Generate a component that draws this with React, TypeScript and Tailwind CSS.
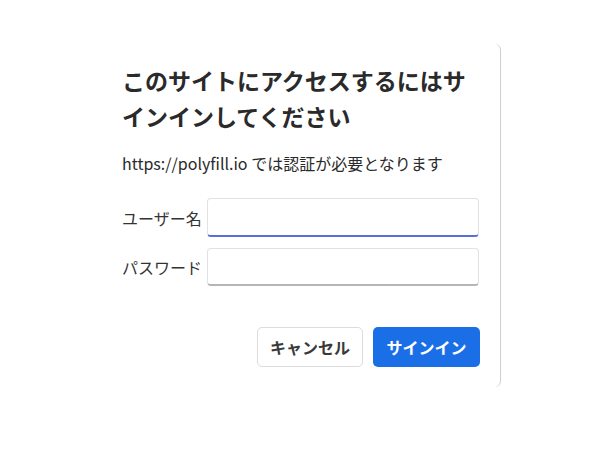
import * as React from "react";

const font = {
  fontFamily: '"Noto Sans CJK JP", "Noto Sans", sans-serif',
};

export default function App() {
  return (
    <div className="h-[450px] w-[600px] bg-white pl-[101px] pt-[44px]" style={font}>
      <div className="flex h-[343px] w-[400px] flex-col rounded-[6px] border-r border-[#cfcfcf] bg-white pb-[20px] pl-[21px] pr-[20px] pt-[18px] shadow-[0_0_1px_rgba(0,0,0,0.04)]">
        <h1 className="text-[23px] font-bold leading-[36px] text-[#2a2a2a]">
          このサイトにアクセスするにはサインインしてください
        </h1>
        <p className="mt-[19px] text-[16px] leading-[20px] text-[#2a2a2a]">
          https://polyfill.io では認証が必要となります
        </p>
        <div className="mt-[25px] grid grid-cols-[85px_1fr] items-center gap-y-[11px]">
          <label className="text-[16px] text-[#333]">ユーザー名</label>
          <input
            className="h-[39px] w-[272px] rounded-[4px] border border-[#e2e2e2] border-b-2 border-b-[#5a6fd4] bg-white px-2 outline-none"
            type="text"
          />
          <label className="text-[16px] text-[#333]">パスワード</label>
          <input
            className="h-[38px] w-[272px] rounded-[4px] border border-[#e2e2e2] border-b-2 border-b-[#b5b5b5] bg-white px-2 outline-none"
            type="password"
          />
        </div>
        <div className="mt-auto flex justify-end gap-[10px]">
          <button className="h-[40px] w-[106px] rounded-[5px] border border-[#dcdcdc] bg-white text-[16px] font-bold text-[#3a3a3a]">
            キャンセル
          </button>
          <button className="h-[40px] w-[107px] rounded-[5px] bg-[#1b6fe6] text-[16px] font-bold text-white">
            サインイン
          </button>
        </div>
      </div>
    </div>
  );
}
